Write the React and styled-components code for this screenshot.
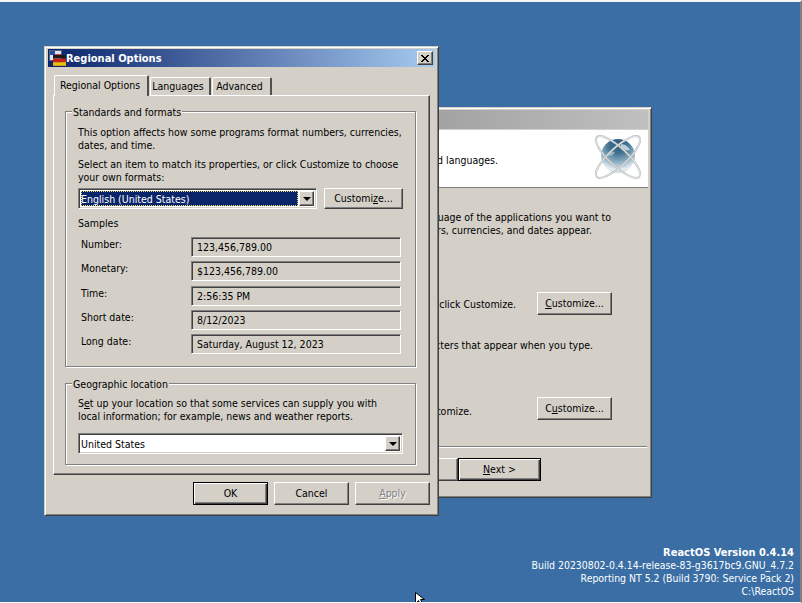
import React from "react";
import styled, { createGlobalStyle } from "styled-components";

const Global = createGlobalStyle`
  html, body { margin: 0; padding: 0; width: 802px; height: 603px; overflow: hidden; background: #3a6ea5; }
  * { box-sizing: border-box; }
  #root { width: 802px; height: 603px; }
  u { text-decoration-thickness: 1px; text-underline-offset: 1px; }
`;

const Desktop = styled.div`
  position: relative;
  width: 802px;
  height: 603px;
  overflow: hidden;
  background: #3a6ea5;
  border-top: 2px solid #f4f6f8;
  border-right: 2px solid #808080;
  border-bottom: 1px solid #f4f6f8;
  font-family: "DejaVu Sans Condensed", "DejaVu Sans", sans-serif;
  font-stretch: condensed;
  font-size: 10.5px;
  color: #000;
  display: flex;
  flex-direction: column;
  justify-content: flex-end;
  align-items: flex-end;
`;

const EdgeMark = styled.div`
  position: absolute;
  right: -2px;
  top: 279px;
  width: 2px;
  height: 17px;
  background: #3d4a68;
`;

const VersionInfo = styled.div`
  color: #fff;
  text-align: right;
  line-height: 13px;
  font-size: 10.4px;
  padding: 0 6px 4px 0;
  white-space: nowrap;
`;

const VersionTitle = styled.div`
  font-weight: 700;
  font-size: 11px;
`;

const Cursor = styled.svg`
  position: absolute;
  left: 415px;
  top: 590px;
`;

const Win = styled.div`
  position: absolute;
  left: ${p => p.$left}px;
  top: ${p => p.$top}px;
  width: ${p => p.$w}px;
  height: ${p => p.$h}px;
  background: #d4d0c8;
  border: 1px solid;
  border-color: #d4d0c8 #404040 #404040 #d4d0c8;
  box-shadow: inset 1px 1px 0 #fff, inset -1px -1px 0 #808080;
  padding: 2px;
  display: flex;
  flex-direction: column;
`;

const TitleBar = styled.div`
  height: 18px;
  margin: 0 1px;
  flex: none;
  display: flex;
  align-items: center;
  padding: 0 2px 0 1px;
  color: #fff;
  font-weight: 700;
  background: linear-gradient(90deg, #0a246a, #a6caf0);
`;

const InactiveBar = styled.div`
  height: 19px;
  margin: 0 1px;
  flex: none;
  background: linear-gradient(90deg, #808080, #c0c0c0);
`;

const TitleText = styled.span`
  flex: 1;
  font-size: 11px;
`;

const CloseBtn = styled.div`
  width: 16px;
  height: 14px;
  background: #d4d0c8;
  border: 1px solid;
  border-color: #fff #404040 #404040 #fff;
  box-shadow: inset -1px -1px 0 #808080;
  display: flex;
  align-items: center;
  justify-content: center;
`;

const TabStrip = styled.div`
  display: flex;
  align-items: flex-end;
  height: 21px;
  margin: 7px 0 0 7px;
  flex: none;
  position: relative;
  z-index: 1;
`;

const Tab = styled.div`
  height: ${p => (p.$active ? 21 : 18)}px;
  width: ${p => p.$w}px;
  margin-left: ${p => (p.$active ? 0 : 1)}px;
  margin-bottom: ${p => (p.$active ? -1 : 0)}px;
  background: #d4d0c8;
  border-top: 1px solid #fff;
  border-left: 1px solid #fff;
  border-right: 2px solid #505050;
  border-radius: 2px 2px 0 0;
  display: flex;
  align-items: center;
  justify-content: center;
  white-space: nowrap;
  padding-bottom: 2px;
  padding-right: ${p => (p.$active ? 2 : 4)}px;
`;

const Sheet = styled.div`
  margin: 0 0 0 6px;
  width: 377px;
  height: 380px;
  flex: none;
  border: 1px solid;
  border-color: #fff #404040 #404040 #fff;
  box-shadow: inset -1px -1px 0 #808080;
  padding: 15px 0 0 11px;
`;

const Group = styled.div`
  margin: 0 0 ${p => p.$mb || 0}px;
  width: 351px;
  height: ${p => p.$h}px;
  position: relative;
  border: 1px solid #808080;
  box-shadow: 1px 1px 0 #fff, inset 1px 1px 0 #fff;
  padding: 0 0 0 12px;
`;

const GroupTitle = styled.span`
  position: absolute;
  left: 6px;
  top: -6px;
  padding: 0 1px;
  background: #d4d0c8;
  line-height: 13px;
`;

const Para = styled.p`
  margin: ${p => p.$mt || 0}px 0 0;
  line-height: 13px;
  width: ${p => p.$w || 335}px;
  white-space: nowrap;
`;

const ComboRow = styled.div`
  display: flex;
  gap: 7px;
  margin-top: ${p => p.$mt || 0}px;
`;

const Combo = styled.div`
  width: ${p => p.$w}px;
  height: 21px;
  background: #fff;
  border: 1px solid;
  border-color: #808080 #fff #fff #808080;
  box-shadow: inset 1px 1px 0 #404040, inset -1px -1px 0 #d4d0c8;
  padding: 2px;
  display: flex;
  align-items: stretch;
`;

const ComboValue = styled.div`
  flex: 1;
  display: flex;
  align-items: center;
  margin: 0 1px 0 0;
  background: ${p => (p.$selected ? "#0a246a" : "#fff")};
  color: ${p => (p.$selected ? "#fff" : "#000")};
  outline: ${p => (p.$selected ? "1px dotted #e8e070" : "none")};
  outline-offset: -1px;
`;

const ComboArrow = styled.div`
  width: 15px;
  background: #d4d0c8;
  border: 1px solid;
  border-color: #fff #404040 #404040 #fff;
  box-shadow: inset -1px -1px 0 #808080;
  display: flex;
  align-items: center;
  justify-content: center;
  &::after {
    content: "";
    border-style: solid;
    border-width: 4px 4px 0;
    border-color: #000 transparent transparent;
  }
`;

const Button = styled.div`
  width: ${p => p.$w || 75}px;
  height: ${p => p.$h || 23}px;
  padding-bottom: 2px;
  background: #d4d0c8;
  border: 1px solid;
  border-color: ${p => (p.$default ? "#000" : "#fff #404040 #404040 #fff")};
  box-shadow: ${p =>
    p.$default
      ? "inset 1px 1px 0 #fff, inset -1px -1px 0 #404040, inset -2px -2px 0 #808080"
      : "inset -1px -1px 0 #808080"};
  display: flex;
  align-items: center;
  justify-content: center;
  white-space: nowrap;
  color: ${p => (p.$disabled ? "#808080" : "#000")};
  text-shadow: ${p => (p.$disabled ? "1px 1px 0 #fff" : "none")};
`;

const SamplesLabel = styled.div`
  margin-top: 8px;
  line-height: 13px;
`;

const SampleList = styled.div`
  display: flex;
  flex-direction: column;
  margin-top: 8px;
  width: 323px;
`;

const SampleRow = styled.div`
  display: grid;
  grid-template-columns: 110px 210px;
  margin-left: 3px;
  height: 24.3px;
`;

const SampleLabel = styled.div`
  line-height: 13px;
`;

const SampleField = styled.div`
  height: 20px;
  margin-top: -1px;
  background: #d4d0c8;
  border: 1px solid;
  border-color: #808080 #fff #fff #808080;
  box-shadow: inset 1px 1px 0 #404040;
  padding-left: 5px;
  display: flex;
  align-items: center;
`;

const Actions = styled.div`
  display: flex;
  gap: 6px;
  margin: 7px 0 0 146px;
`;

const WizardHeader = styled.div`
  height: 58px;
  flex: none;
  margin: 1px 1px 0;
  background: #fff;
  border-bottom: 1px solid #808080;
  display: flex;
  align-items: flex-start;
  justify-content: flex-end;
  padding: 3px 5px 0 0;
  position: relative;
`;

const WizardBody = styled.div`
  flex: 1;
  display: flex;
  flex-direction: column;
`;

const Line = styled.div`
  line-height: 13px;
  white-space: nowrap;
  margin-top: ${p => p.$mt || 0}px;
  text-align: right;
  padding-right: ${p => p.$pr || 0}px;
`;

const HeaderLine = styled(Line)`
  position: absolute;
  right: ${p => p.$pr}px;
  top: 24px;
  padding: 0;
`;

const LineWithButton = styled.div`
  display: flex;
  justify-content: flex-end;
  align-items: center;
  gap: ${p => p.$gap}px;
  height: 23px;
  margin-top: ${p => p.$mt || 0}px;
  padding-right: 37px;
  white-space: nowrap;
`;

const LineText = styled.span`
  padding-top: ${p => p.$pt || 0}px;
`;

const WizardRule = styled.div`
  height: 2px;
  margin: 26px 2px 0 0;
  background: #808080;
  border-bottom: 1px solid #fff;
`;

const WizardActions = styled.div`
  display: flex;
  justify-content: flex-end;
  padding-right: 108px;
  margin-top: 10px;
`;

const FlagIcon = () => (
  <svg width="17" height="16" viewBox="0 0 17 16">
    <rect x="0.5" y="0.5" width="12" height="10" fill="#dfe6f2" stroke="#50607c" />
    <rect x="1" y="1" width="5" height="4" fill="#2a4ea0" />
    <rect x="6" y="4" width="6" height="1" fill="#c04040" />
    <rect x="4" y="5" width="13" height="3.6" fill="#1c1c1c" />
    <rect x="4" y="8.6" width="13" height="3.6" fill="#c82020" />
    <rect x="4" y="12.2" width="13" height="3.6" fill="#f0c000" />
  </svg>
);

const CloseGlyph = () => (
  <svg width="8" height="7" viewBox="0 0 8 7" shapeRendering="crispEdges">
    <path d="M0 0h2v1h1v1h2V1h1V0h2v1H7v1H6v1H5v1h1v1h1v1h1v1H6V6H5V5H3v1H2v1H0V6h1V5h1V4h1V3H2V2H1V1H0z" fill="#000" />
  </svg>
);

const GlobeIcon = () => (
  <svg width="50" height="50" viewBox="0 0 50 50">
    <defs>
      <radialGradient id="ball" cx="0.5" cy="0.15" r="0.9">
        <stop offset="0" stopColor="#2c5c7c" />
        <stop offset="0.3" stopColor="#3f718f" />
        <stop offset="0.6" stopColor="#8fb0c4" />
        <stop offset="0.85" stopColor="#e8f0f4" />
        <stop offset="1" stopColor="#b4c6d2" />
      </radialGradient>
    </defs>
    <circle cx="25" cy="23" r="17" fill="url(#ball)" />
    <path d="M28 11c4 0 7 2 9 6-3 1-6 0-7-1-2-1-3-3-2-5z" fill="#e6eef2" opacity="0.75" />
    <path d="M14 22c2-3 5-4 8-3-1 3-5 5-8 3z" fill="#dbe6ec" opacity="0.5" />
    <g fill="none">
      <ellipse cx="25" cy="24" rx="29" ry="9" transform="rotate(43 25 24)" stroke="#b4b8b8" strokeWidth="2" />
      <ellipse cx="25" cy="24" rx="29" ry="9" transform="rotate(43 25 24)" stroke="#f4f6f6" strokeWidth="0.8" />
      <ellipse cx="25" cy="24" rx="29" ry="9" transform="rotate(-43 25 24)" stroke="#b4b8b8" strokeWidth="2" />
      <ellipse cx="25" cy="24" rx="29" ry="9" transform="rotate(-43 25 24)" stroke="#f4f6f6" strokeWidth="0.8" />
    </g>
  </svg>
);

const samples = [
  ["Number:", "123,456,789.00"],
  ["Monetary:", "$123,456,789.00"],
  ["Time:", "2:56:35 PM"],
  ["Short date:", "8/12/2023"],
  ["Long date:", "Saturday, August 12, 2023"],
];

export default function App() {
  return (
    <>
      <Global />
      <Desktop>
        <EdgeMark />
        <Win $left={190} $top={105} $w={462} $h={391}>
          <InactiveBar />
          <WizardHeader>
            <HeaderLine $pr={150}>You can customize ReactOS for different regions and languages.</HeaderLine>
            <GlobeIcon />
          </WizardHeader>
          <WizardBody>
            <Line $mt={23} $pr={38}>The system locale should match the language of the applications you want to</Line>
            <Line $pr={57}>use. The locale controls how numbers, currencies, and dates appear.</Line>
            <LineWithButton $mt={55} $gap={21}>
              <LineText>To change system or user locale settings, click Customize.</LineText>
              <Button $w={75} $h={23}><span><u>C</u>ustomize...</span></Button>
            </LineWithButton>
            <Line $mt={24} $pr={56}>The keyboard layout controls the characters that appear when you type.</Line>
            <LineWithButton $mt={45} $gap={65}>
              <LineText $pt={4}>To change the keyboard layout, click Customize.</LineText>
              <Button $w={75} $h={23}><span>C<u>u</u>stomize...</span></Button>
            </LineWithButton>
            <WizardRule />
            <WizardActions>
              <Button $w={75}><span>&lt; <u>B</u>ack</span></Button>
              <Button $w={83} $default><span><u>N</u>ext &gt;</span></Button>
            </WizardActions>
          </WizardBody>
        </Win>

        <Win $left={44} $top={44} $w={395} $h={470}>
          <TitleBar>
            <FlagIcon />
            <TitleText>Regional Options</TitleText>
            <CloseBtn><CloseGlyph /></CloseBtn>
          </TitleBar>
          <TabStrip>
            <Tab $active $w={95}>Regional Options</Tab>
            <Tab $w={61}>Languages</Tab>
            <Tab $w={60}>Advanced</Tab>
          </TabStrip>
          <Sheet>
            <Group $h={256} $mb={16}>
              <GroupTitle>Standards and formats</GroupTitle>
              <Para $mt={14}>This option affects how some programs format numbers, currencies,<br />dates, and time.</Para>
              <Para $mt={6}>Select an item to match its properties, or click Customize to choose<br />your own formats:</Para>
              <ComboRow $mt={4}>
                <Combo $w={239}>
                  <ComboValue $selected>English (United States)</ComboValue>
                  <ComboArrow />
                </Combo>
                <Button $w={79} $h={21}><span>Customi<u>z</u>e...</span></Button>
              </ComboRow>
              <SamplesLabel>Samples</SamplesLabel>
              <SampleList>
                {samples.map(([label, value]) => (
                  <SampleRow key={label}>
                    <SampleLabel>{label}</SampleLabel>
                    <SampleField>{value}</SampleField>
                  </SampleRow>
                ))}
              </SampleList>
            </Group>
            <Group $h={82}>
              <GroupTitle>Geographic location</GroupTitle>
              <Para $mt={13}>S<u>e</u>t up your location so that some services can supply you with<br />local information; for example, news and weather reports.</Para>
              <ComboRow $mt={10}>
                <Combo $w={325}>
                  <ComboValue>United States</ComboValue>
                  <ComboArrow />
                </Combo>
              </ComboRow>
            </Group>
          </Sheet>
          <Actions>
            <Button $w={75} $default><span>OK</span></Button>
            <Button $w={75}><span>Cancel</span></Button>
            <Button $w={75} $disabled><span><u>A</u>pply</span></Button>
          </Actions>
        </Win>

        <VersionInfo>
          <VersionTitle>ReactOS Version 0.4.14</VersionTitle>
          <div>Build 20230802-0.4.14-release-83-g3617bc9.GNU_4.7.2</div>
          <div>Reporting NT 5.2 (Build 3790: Service Pack 2)</div>
          <div>C:\ReactOS</div>
        </VersionInfo>

        <Cursor width="12" height="13" viewBox="0 0 12 13">
          <path d="M0.5 0.5v11l3-3 2 4 2-1-2-4h4z" fill="#fff" stroke="#000" />
        </Cursor>
      </Desktop>
    </>
  );
}
